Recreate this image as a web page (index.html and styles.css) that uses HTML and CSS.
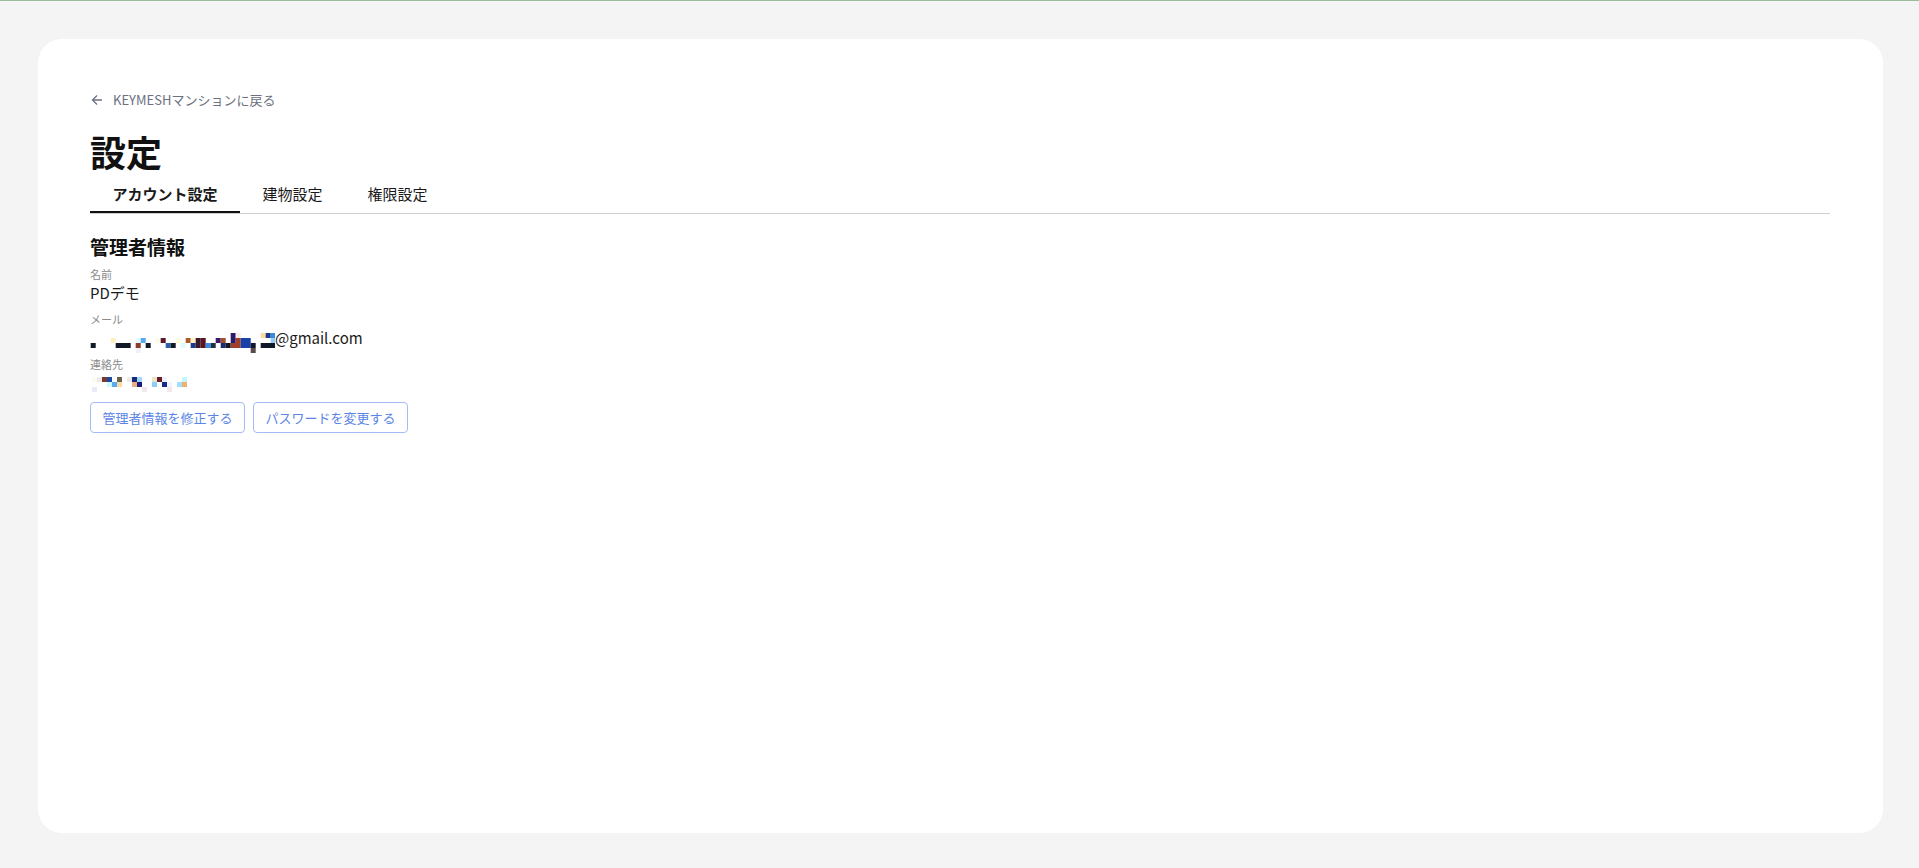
FILE: index.html
```html
<!DOCTYPE html>
<html lang="ja">
<head>
  <meta charset="UTF-8">
  <meta name="viewport" content="width=device-width, initial-scale=1.0">
  <title>設定 - KEYMESH</title>
  <link rel="stylesheet" href="styles.css">
</head>
<body>
  <main class="card">
    <a class="back" href="#">
      <svg width="12" height="12" viewBox="0 0 12 12"><path d="M11 6H1.5M6 1.5L1.5 6 6 10.5" fill="none" stroke="currentColor" stroke-width="1.3"/></svg>
      KEYMESHマンションに戻る
    </a>
    <h1>設定</h1>

    <nav class="tabs">
      <a class="tab active" href="#">アカウント設定</a>
      <a class="tab" href="#">建物設定</a>
      <a class="tab" href="#">権限設定</a>
    </nav>

    <section class="info">
      <h2>管理者情報</h2>

      <div class="field">
        <div class="label">名前</div>
        <div class="value">PDデモ</div>
      </div>

      <div class="field">
        <div class="label">メール</div>
        <div class="value row">
          <!-- モザイク処理済み -->
          <svg class="mosaic" width="187" height="25" viewBox="0 0 187 25">
            <rect x="2.7" y="15" width="5" height="5" fill="#111827"/>
            <rect x="22.7" y="10" width="5" height="5" fill="#fdf1c4"/>
            <rect x="27.7" y="15" width="15" height="5" fill="#101828"/>
            <rect x="47.7" y="10" width="5" height="5" fill="#e0fbff"/>
            <rect x="52.7" y="10" width="5" height="5" fill="#5aa9f0"/>
            <rect x="47.7" y="15" width="5" height="5" fill="#8a3b2a"/>
            <rect x="47.7" y="20" width="5" height="5" fill="#eef0fa"/>
            <rect x="57.7" y="15" width="5" height="5" fill="#111827"/>
            <rect x="67.7" y="10" width="5" height="5" fill="#fdfae8"/>
            <rect x="72.7" y="10" width="5" height="5" fill="#5a1a2a"/>
            <rect x="77.7" y="15" width="5" height="5" fill="#2f5fa8"/>
            <rect x="82.7" y="15" width="5" height="5" fill="#111827"/>
            <rect x="87.7" y="10" width="5" height="5" fill="#fdfae0"/>
            <rect x="92.7" y="15" width="5" height="5" fill="#e0faff"/>
            <rect x="97.7" y="10" width="5" height="5" fill="#b05a2a"/>
            <rect x="102.7" y="10" width="5" height="5" fill="#fdf1c4"/>
            <rect x="102.7" y="15" width="5" height="5" fill="#1a3a8a"/>
            <rect x="107.7" y="10" width="5" height="10" fill="#3a1a2a"/>
            <rect x="112.7" y="10" width="5" height="10" fill="#5a1525"/>
            <rect x="117.7" y="15" width="5" height="5" fill="#3a8ae0"/>
            <rect x="122.7" y="15" width="5" height="5" fill="#223040"/>
            <rect x="127.7" y="10" width="5" height="5" fill="#3a1a6a"/>
            <rect x="132.7" y="10" width="5" height="5" fill="#a0522d"/>
            <rect x="132.7" y="15" width="5" height="5" fill="#1a2a6a"/>
            <rect x="137.7" y="15" width="5" height="5" fill="#111827"/>
            <rect x="142.7" y="5" width="5" height="10" fill="#2a1a6a"/>
            <rect x="147.7" y="5" width="5" height="5" fill="#fbeaea"/>
            <rect x="142.7" y="15" width="10" height="5" fill="#a0402a"/>
            <rect x="147.7" y="10" width="5" height="5" fill="#a0402a"/>
            <rect x="152.7" y="10" width="10" height="10" fill="#1a3fa8"/>
            <rect x="162.7" y="15" width="5" height="5" fill="#111827"/>
            <rect x="162.7" y="20" width="5" height="5" fill="#5a4a4a"/>
            <rect x="172.7" y="5" width="5" height="5" fill="#fcd9a0"/>
            <rect x="177.7" y="5" width="5" height="5" fill="#1a3a8a"/>
            <rect x="182.7" y="5" width="5" height="5" fill="#3a8ae0"/>
            <rect x="182.7" y="10" width="5" height="5" fill="#8ad0f8"/>
            <rect x="172.7" y="15" width="15" height="5" fill="#111827"/>
          </svg>
          <span>@gmail.com</span>
        </div>
      </div>

      <div class="field">
        <div class="label">連絡先</div>
        <div class="value row">
          <svg class="mosaic" width="100" height="20" viewBox="0 0 100 20">
            <rect x="4" y="4" width="5" height="5" fill="#fdfaf0"/>
            <rect x="9" y="4" width="5" height="5" fill="#f0e8ea"/>
            <rect x="14" y="4" width="5" height="5" fill="#7a3a2a"/>
            <rect x="19" y="4" width="5" height="5" fill="#1a4aa8"/>
            <rect x="29" y="4" width="5" height="5" fill="#6a6050"/>
            <rect x="19" y="9" width="5" height="5" fill="#d0f8ff"/>
            <rect x="24" y="9" width="5" height="5" fill="#5aaaf0"/>
            <rect x="29" y="9" width="5" height="5" fill="#fcd9a0"/>
            <rect x="4" y="14" width="5" height="5" fill="#e8ecf8"/>
            <rect x="39" y="4" width="5" height="5" fill="#eaeaee"/>
            <rect x="44" y="4" width="5" height="5" fill="#1a2a7a"/>
            <rect x="49" y="4" width="5" height="5" fill="#a0d8f8"/>
            <rect x="44" y="9" width="5" height="5" fill="#e8b080"/>
            <rect x="49" y="9" width="5" height="5" fill="#1a1a7a"/>
            <rect x="54" y="14" width="5" height="5" fill="#f0e8ec"/>
            <rect x="64" y="4" width="5" height="5" fill="#e8e4c8"/>
            <rect x="69" y="4" width="5" height="5" fill="#6a1a2a"/>
            <rect x="74" y="4" width="5" height="5" fill="#eef0fa"/>
            <rect x="64" y="9" width="5" height="5" fill="#8ad0f8"/>
            <rect x="74" y="9" width="5" height="5" fill="#1a2a8a"/>
            <rect x="79" y="9" width="5" height="5" fill="#f0f4ff"/>
            <rect x="79" y="14" width="5" height="5" fill="#f0e8ee"/>
            <rect x="94" y="4" width="5" height="5" fill="#c0f8ff"/>
            <rect x="89" y="9" width="5" height="5" fill="#a0e0fa"/>
            <rect x="94" y="9" width="5" height="5" fill="#f0b070"/>
          </svg>
        </div>
      </div>

      <div class="actions">
        <button type="button">管理者情報を修正する</button>
        <button type="button">パスワードを変更する</button>
      </div>
    </section>
  </main>
</body>
</html>
```

FILE: styles.css
```css
html, body {
  height: 100%;
}
body {
  margin: 0;
  box-sizing: border-box;
  padding: 38px 36px 35px 38px;
  background: #f4f4f4;
  border-top: 1px solid #9dbc9d;
  font-family: "Noto Sans CJK JP", "Noto Sans", sans-serif;
  color: #111;
}

.card {
  height: 100%;
  box-sizing: border-box;
  background: #fff;
  border-radius: 24px;
  padding: 50px 53px 0 52px;
}

/* 戻るリンク */
.back {
  display: flex;
  align-items: center;
  height: 20px;
  font-size: 13px;
  color: #6b7180;
  text-decoration: none;
}
.back svg {
  margin: 1px 10px 0 1px;
}

h1 {
  margin: 20px 0 0;
  font-size: 36px;
  line-height: 44px;
  font-weight: 700;
}

/* タブ */
.tabs {
  display: flex;
  border-bottom: 1px solid #cfcfcf;
}
.tab {
  padding: 10px 22.5px 6px;
  font-size: 15px;
  line-height: 22px;
  color: #1a1a1a;
  text-decoration: none;
  border-bottom: 2px solid transparent;
}
.tab.active {
  font-weight: 700;
  border-bottom-color: #111;
}

/* 管理者情報 */
h2 {
  margin: 20px 0 7px;
  font-size: 19px;
  line-height: 26px;
  font-weight: 700;
}
.field + .field {
  margin-top: 8px;
}
.label {
  font-size: 11px;
  line-height: 14px;
  color: #8a8a8a;
}
.value {
  font-size: 15px;
  line-height: 23px;
  color: #1a1a1a;
}
.value.row {
  display: flex;
  align-items: flex-start;
  height: 23px;
}
.mosaic {
  display: block;
  flex-shrink: 0;
  margin: 2px 0 0 -2px;
}

.actions {
  display: flex;
  gap: 8px;
  margin-top: 8px;
}
.actions button {
  height: 31px;
  padding: 0 11.5px;
  background: #fff;
  border: 1px solid #a3bdf4;
  border-radius: 4px;
  color: #5b85e6;
  font-family: inherit;
  font-size: 13px;
  cursor: pointer;
}
```
